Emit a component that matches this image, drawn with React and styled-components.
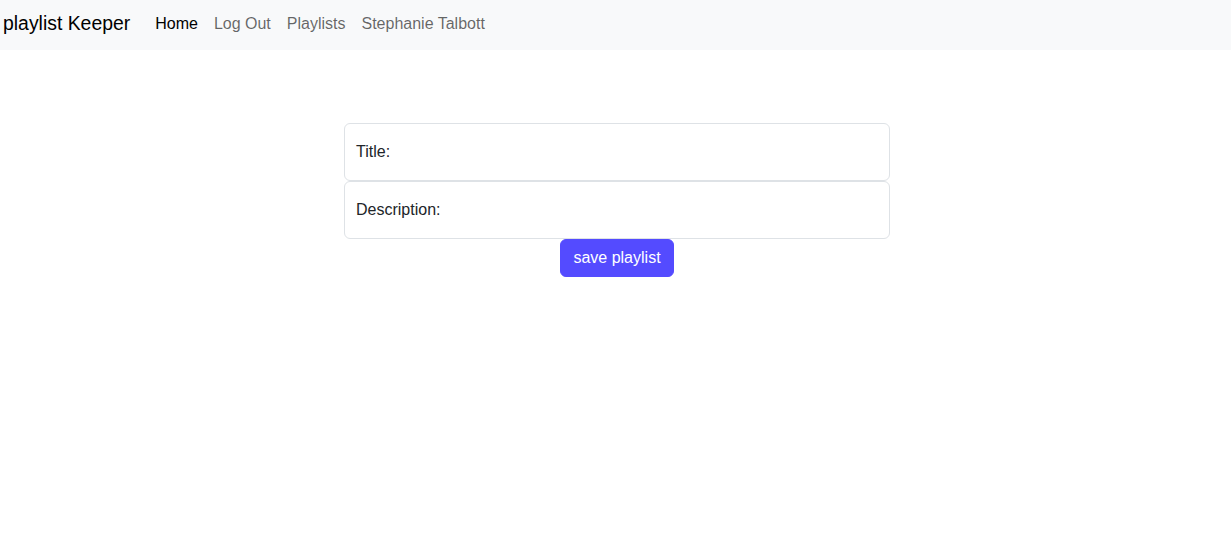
import React from 'react'
import styled, { createGlobalStyle } from 'styled-components'

const GlobalStyle = createGlobalStyle`
  body {
    margin: 0;
    font-family: "Liberation Sans", Arial, sans-serif;
    font-size: 16px;
    line-height: 1.5;
    color: #212529;
    background: #ffffff;
  }
`

const Navbar = styled.nav`
  display: flex;
  align-items: center;
  height: 50px;
  padding: 0 3px 2px;
  background: #f8f9fa;
  box-sizing: border-box;
`

const Brand = styled.a`
  font-size: 19.4px;
  color: #000;
  margin-right: 17px;
  text-decoration: none;
`

const NavList = styled.div`
  display: flex;
`

const NavLink = styled.a`
  padding: 0 8px;
  font-size: 16px;
  text-decoration: none;
  color: ${({ $active }) => ($active ? '#000' : 'rgba(0, 0, 0, 0.6)')};
`

const Main = styled.main`
  display: flex;
  flex-direction: column;
  align-items: center;
  padding-top: 73px;
  padding-left: 3px;
`

const Form = styled.form`
  width: 546px;
  display: flex;
  flex-direction: column;
  align-items: center;
`

const Card = styled.div`
  width: 100%;
  box-sizing: border-box;
  border: 1px solid #dee2e6;
  border-radius: 6px;
  padding: 16px 11px;
  background: #fff;
`

const Label = styled.label`
  display: block;
  line-height: 24px;
`

const SaveButton = styled.button`
  font-family: inherit;
  font-size: 16px;
  line-height: 24px;
  color: #fff;
  background: #544bff;
  border: 1px solid #544bff;
  border-radius: 6px;
  padding: 6px 12px;
  cursor: pointer;
`

export default function App() {
  return (
    <>
      <GlobalStyle />
      <Navbar>
        <Brand href="#">playlist Keeper</Brand>
        <NavList>
          <NavLink $active href="#">Home</NavLink>
          <NavLink href="#">Log Out</NavLink>
          <NavLink href="#">Playlists</NavLink>
          <NavLink href="#">Stephanie Talbott</NavLink>
        </NavList>
      </Navbar>
      <Main>
        <Form onSubmit={(e) => e.preventDefault()}>
          <Card>
            <Label>Title:</Label>
          </Card>
          <Card>
            <Label>Description:</Label>
          </Card>
          <SaveButton type="submit">save playlist</SaveButton>
        </Form>
      </Main>
    </>
  )
}
